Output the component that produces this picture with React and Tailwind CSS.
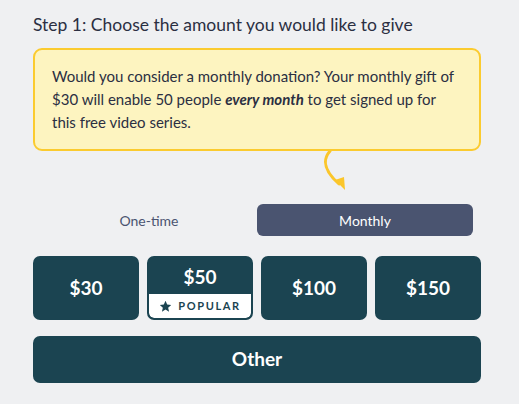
import React from "react";

export default function App() {
  return (
    <div className="min-h-[404px] w-full bg-[#eff0f2] text-[#2b2f42]" style={{ fontFamily: "Lato, 'Noto Sans', sans-serif" }}>
      <div className="w-[448px] ml-[33px] pt-[14px]">
        <h2 className="text-[17.5px] leading-[22px] text-[#2b2f42]">Step 1: Choose the amount you would like to give</h2>
        <div className="mt-[12px] rounded-[9px] border-2 border-[#fbcb2f] bg-[#fdf4c0] pl-[17px] pr-[22px] pt-[15px] pb-[15px] text-[15px] leading-[23px] text-[#2b2f42]">
          Would you consider a monthly donation? Your monthly gift of $30 will enable 50 people <b><i>every month</i></b> to get signed up for this free video series.
        </div>
        <div className="h-[47px] flex">
          <svg width="40" height="47" viewBox="0 0 40 47" className="ml-[282px]">
            <path d="M15 0 C 9 7, 6 17, 24 33" fill="none" stroke="#fbc62b" strokeWidth="3" strokeLinecap="round" />
            <path d="M20 29 L30 39 L29 26 Z" fill="#fbc62b" />
          </svg>
        </div>
        <div className="grid grid-cols-2 px-[8px] py-[8px] -mt-[2px]">
          <button className="h-[32px] rounded-[6px] text-[14px] text-[#4a5470]">One-time</button>
          <button className="h-[32px] rounded-[6px] bg-[#4a5470] text-[14px] text-white">Monthly</button>
        </div>
        <div className="grid grid-cols-4 gap-[8px] mt-[12px]">
          <button className="h-[64px] rounded-[7px] bg-[#1b4451] text-white text-[19px] font-bold">$30</button>
          <button className="h-[64px] rounded-[7px] bg-[#1b4451] border-2 border-[#1b4451] flex flex-col overflow-hidden">
            <span className="flex-1 flex items-center justify-center text-white text-[19px] font-bold pt-[2px]">$50</span>
            <span className="h-[24px] bg-white rounded-b-[5px] flex items-center justify-center gap-[6px] text-[#1b4451] text-[11px] font-bold tracking-[0.15em]">
              <svg width="13" height="13" viewBox="0 0 24 24" fill="#1b4451"><path d="M12 1.5l3.1 6.9 7.4.7-5.6 5 1.7 7.4L12 17.6l-6.6 3.9 1.7-7.4-5.6-5 7.4-.7z" /></svg>
              POPULAR
            </span>
          </button>
          <button className="h-[64px] rounded-[7px] bg-[#1b4451] text-white text-[19px] font-bold">$100</button>
          <button className="h-[64px] rounded-[7px] bg-[#1b4451] text-white text-[19px] font-bold">$150</button>
        </div>
        <button className="mt-[16px] w-full h-[47px] rounded-[7px] bg-[#1b4451] text-white text-[19px] font-bold">Other</button>
      </div>
    </div>
  );
}
